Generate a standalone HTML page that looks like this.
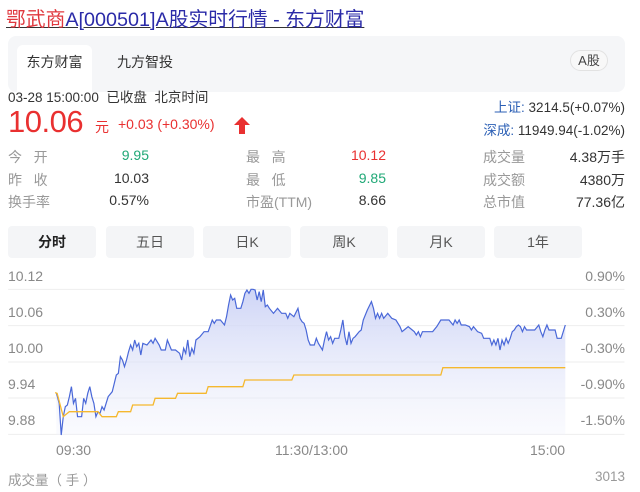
<!DOCTYPE html>
<html><head><meta charset="utf-8"><style>
*{margin:0;padding:0;box-sizing:border-box}
body{width:640px;height:492px;background:#fff;font-family:"Liberation Sans","Noto Sans CJK SC",sans-serif;color:#333;position:relative;overflow:hidden}
.a{position:absolute;white-space:nowrap}
.g{color:#999;font-size:14px}
.v{font-size:14px;text-align:right}
.btn{position:absolute;top:226px;height:32px;width:88px;background:#f4f5f7;border-radius:4px;text-align:center;line-height:32px;font-size:14px;color:#555}
.ax{font-size:14px;color:#888}
</style></head><body>
<div class="a" style="left:6px;top:3px;font-size:19.8px;text-decoration:underline"><span style="color:#e0383e">鄂武商</span><span style="color:#2b2ba8">A[000501]A股实时行情 - 东方财富</span></div>
<div class="a" style="left:8px;top:36px;width:617px;height:56px;background:#f5f6f8;border-radius:8px"></div>
<div class="a" style="left:17px;top:45px;width:75px;height:47px;background:#fff;border-radius:6px 6px 0 0;font-size:14px;line-height:34px;text-align:center;color:#333">东方财富</div>
<div class="a" style="left:117px;top:45px;font-size:14px;line-height:34px;color:#333">九方智投</div>
<div class="a" style="left:570px;top:50px;width:38px;height:21px;border:1px solid #e2e2e2;border-radius:11px;background:#f8f8f8;font-size:13px;line-height:19px;text-align:center;color:#444">A股</div>
<div class="a" style="left:8px;top:86px;font-size:13.5px;color:#333">03-28 15:00:00 &nbsp;已收盘 &nbsp;北京时间</div>
<div class="a" style="left:8px;top:104px;font-size:31px;color:#e93030;letter-spacing:-0.5px">10.06</div>
<div class="a" style="left:95px;top:117px;font-size:14px;color:#e93030">元</div>
<div class="a" style="left:118px;top:116px;font-size:14px;color:#e93030">+0.03 (+0.30%)</div>
<svg class="a" style="left:234px;top:117px" width="16" height="17" viewBox="0 0 16 17"><path d="M8 0L16 8H11V17H5V8H0Z" fill="#e93030"/></svg>
<div class="a" style="right:15px;top:96px;font-size:13.5px;color:#333"><span style="color:#2b5fb5">上证:</span> 3214.5(+0.07%)</div>
<div class="a" style="right:15px;top:119px;font-size:13.5px;color:#333"><span style="color:#2b5fb5">深成:</span> 11949.94(-1.02%)</div>

<div class="a g" style="left:8px;top:147px">今&nbsp;&nbsp;&nbsp;开</div>
<div class="a v" style="right:491px;top:147px;color:#1fa876">9.95</div>
<div class="a g" style="left:8px;top:170px">昨&nbsp;&nbsp;&nbsp;收</div>
<div class="a v" style="right:491px;top:170px">10.03</div>
<div class="a g" style="left:8px;top:192px">换手率</div>
<div class="a v" style="right:491px;top:192px">0.57%</div>
<div class="a g" style="left:246px;top:147px">最&nbsp;&nbsp;&nbsp;高</div>
<div class="a v" style="right:254px;top:147px;color:#e93030">10.12</div>
<div class="a g" style="left:246px;top:170px">最&nbsp;&nbsp;&nbsp;低</div>
<div class="a v" style="right:254px;top:170px;color:#1fa876">9.85</div>
<div class="a g" style="left:246px;top:192px">市盈(TTM)</div>
<div class="a v" style="right:254px;top:192px">8.66</div>
<div class="a g" style="left:483px;top:147px">成交量</div>
<div class="a v" style="right:15px;top:147px">4.38万手</div>
<div class="a g" style="left:483px;top:170px">成交额</div>
<div class="a v" style="right:15px;top:170px">4380万</div>
<div class="a g" style="left:483px;top:192px">总市值</div>
<div class="a v" style="right:15px;top:192px">77.36亿</div>

<div class="btn" style="left:8px;color:#222;font-weight:bold">分时</div>
<div class="btn" style="left:106px">五日</div>
<div class="btn" style="left:203px">日K</div>
<div class="btn" style="left:300px">周K</div>
<div class="btn" style="left:397px">月K</div>
<div class="btn" style="left:494px">1年</div>

<div class="a ax" style="left:8px;top:268px">10.12</div>
<div class="a ax" style="left:8px;top:304px">10.06</div>
<div class="a ax" style="left:8px;top:340px">10.00</div>
<div class="a ax" style="left:8px;top:376px">9.94</div>
<div class="a ax" style="left:8px;top:412px">9.88</div>
<div class="a ax" style="right:15px;top:268px">0.90%</div>
<div class="a ax" style="right:15px;top:304px">0.30%</div>
<div class="a ax" style="right:15px;top:340px">-0.30%</div>
<div class="a ax" style="right:15px;top:376px">-0.90%</div>
<div class="a ax" style="right:15px;top:412px">-1.50%</div>
<div class="a ax" style="left:56px;top:442px">09:30</div>
<div class="a ax" style="left:275px;top:442px">11:30/13:00</div>
<div class="a ax" style="left:530px;top:442px">15:00</div>
<div class="a" style="left:8px;top:469px;font-size:13.5px;color:#999">成交量（ 手 ）</div>
<div class="a" style="right:15px;top:469px;font-size:13.5px;color:#999">3013</div>

<svg class="a" style="left:0;top:260px" width="640" height="232" viewBox="0 0 1568 696" preserveAspectRatio="none">
<defs><linearGradient id="gr" x1="0" y1="0" x2="0" y2="1"><stop offset="0" stop-color="#c9d0f5" stop-opacity="0.9"/><stop offset="1" stop-color="#eef0fb" stop-opacity="0.3"/></linearGradient></defs>
<g stroke="#eeeeee" stroke-width="1">
<line x1="20" y1="88" x2="1530" y2="88" vector-effect="non-scaling-stroke"/><line x1="20" y1="197" x2="1530" y2="197" vector-effect="non-scaling-stroke"/><line x1="20" y1="306" x2="1530" y2="306" vector-effect="non-scaling-stroke"/><line x1="20" y1="414" x2="1530" y2="414" vector-effect="non-scaling-stroke"/><line x1="20" y1="523" x2="1530" y2="523" vector-effect="non-scaling-stroke"/></g>
<polygon fill="url(#gr)" points="138,525 138,398 145,430 150,525 155,470 160,440 165,435 170,410 175,380 180,430 185,415 190,470 200,470 205,415 210,430 215,400 220,380 225,410 230,430 235,470 240,455 245,460 250,440 255,450 260,430 265,410 275,395 280,370 285,345 290,340 295,290 300,300 305,320 310,300 315,275 320,255 325,270 330,240 335,260 340,250 345,285 350,250 360,255 370,240 375,250 380,235 390,255 395,270 405,270 410,240 415,255 420,270 430,270 440,280 445,300 450,265 455,280 460,240 465,290 470,265 475,280 480,240 490,230 500,215 510,215 520,180 525,190 530,180 540,180 550,195 555,170 560,135 565,105 570,120 575,115 580,145 590,145 595,125 600,100 605,90 610,100 615,88 620,88 625,90 630,120 635,95 640,125 645,90 650,140 655,135 660,145 670,160 680,145 690,160 700,160 705,175 710,160 720,170 730,145 735,175 740,185 745,190 750,210 755,240 760,255 770,255 775,235 780,250 790,270 795,240 800,215 805,240 810,230 815,250 820,235 830,235 835,210 840,180 845,230 850,255 855,215 860,250 865,235 870,230 880,215 885,210 890,180 900,150 910,125 915,145 920,175 925,160 930,175 935,160 940,175 950,160 960,175 970,180 980,200 985,215 990,210 1000,200 1010,210 1015,215 1020,225 1025,215 1030,230 1035,215 1060,215 1070,200 1080,180 1100,180 1110,195 1115,180 1120,190 1125,180 1130,195 1140,195 1150,200 1155,210 1160,200 1170,215 1180,220 1185,235 1200,235 1205,255 1210,240 1215,255 1220,235 1225,270 1230,240 1235,255 1240,235 1245,250 1250,235 1255,215 1260,210 1265,200 1270,195 1275,200 1280,215 1285,200 1290,210 1310,210 1320,195 1325,215 1330,230 1335,210 1340,195 1345,210 1360,210 1365,235 1375,235 1385,195 1385,525"/>
<polyline fill="none" stroke="#4a68d8" stroke-width="1.2" vector-effect="non-scaling-stroke" points="138,398 145,430 150,525 155,470 160,440 165,435 170,410 175,380 180,430 185,415 190,470 200,470 205,415 210,430 215,400 220,380 225,410 230,430 235,470 240,455 245,460 250,440 255,450 260,430 265,410 275,395 280,370 285,345 290,340 295,290 300,300 305,320 310,300 315,275 320,255 325,270 330,240 335,260 340,250 345,285 350,250 360,255 370,240 375,250 380,235 390,255 395,270 405,270 410,240 415,255 420,270 430,270 440,280 445,300 450,265 455,280 460,240 465,290 470,265 475,280 480,240 490,230 500,215 510,215 520,180 525,190 530,180 540,180 550,195 555,170 560,135 565,105 570,120 575,115 580,145 590,145 595,125 600,100 605,90 610,100 615,88 620,88 625,90 630,120 635,95 640,125 645,90 650,140 655,135 660,145 670,160 680,145 690,160 700,160 705,175 710,160 720,170 730,145 735,175 740,185 745,190 750,210 755,240 760,255 770,255 775,235 780,250 790,270 795,240 800,215 805,240 810,230 815,250 820,235 830,235 835,210 840,180 845,230 850,255 855,215 860,250 865,235 870,230 880,215 885,210 890,180 900,150 910,125 915,145 920,175 925,160 930,175 935,160 940,175 950,160 960,175 970,180 980,200 985,215 990,210 1000,200 1010,210 1015,215 1020,225 1025,215 1030,230 1035,215 1060,215 1070,200 1080,180 1100,180 1110,195 1115,180 1120,190 1125,180 1130,195 1140,195 1150,200 1155,210 1160,200 1170,215 1180,220 1185,235 1200,235 1205,255 1210,240 1215,255 1220,235 1225,270 1230,240 1235,255 1240,235 1245,250 1250,235 1255,215 1260,210 1265,200 1270,195 1275,200 1280,215 1285,200 1290,210 1310,210 1320,195 1325,215 1330,230 1335,210 1340,195 1345,210 1360,210 1365,235 1375,235 1385,195"/>
<polyline fill="none" stroke="#f5b82e" stroke-width="1.3" vector-effect="non-scaling-stroke" points="135,398 140,400 155,470 170,455 240,455 250,470 285,470 290,455 320,455 325,435 375,435 380,415 430,415 435,400 505,400 510,380 595,380 600,360 715,360 720,345 1080,345 1085,323 1385,323"/>
</svg>
</body></html>
